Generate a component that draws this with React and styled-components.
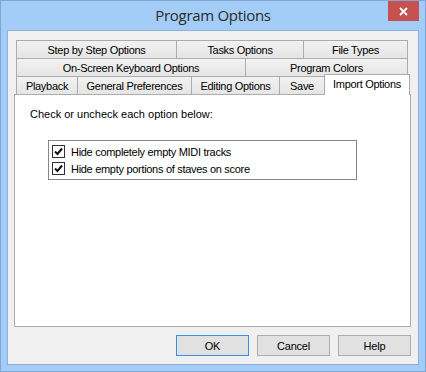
import React from 'react'
import styled, { createGlobalStyle } from 'styled-components'

const Global = createGlobalStyle`
  html, body { margin: 0; padding: 0; background: #a3cdf7; }
  * { box-sizing: border-box; }
`

const Window = styled.div`
  width: 426px;
  height: 372px;
  border: 1px solid #7ea7d6;
  background: #a3cdf7;
  display: flex;
  flex-direction: column;
  font-family: "Liberation Sans", Arial, sans-serif;
  font-size: 11px;
  color: #000;
`

const TitleBar = styled.div`
  height: 29px;
  display: flex;
  align-items: flex-start;
  padding-right: 6px;
`

const Title = styled.div`
  flex: 1;
  padding-left: 37px;
  text-align: center;
  line-height: 29px;
  font-family: "Open Sans", "Noto Sans", sans-serif;
  font-size: 15px;
  letter-spacing: -0.3px;
  color: #2a2a2a;
`

const CloseButton = styled.div`
  width: 31px;
  height: 20px;
  background: #c75050;
  display: flex;
  align-items: center;
  justify-content: center;
`

const Client = styled.div`
  flex: 1;
  margin: 0 6px 6px 6px;
  border: 1px solid #8eb0da;
  background: #f0f0f0;
  padding: 9px 7px 8px 6px;
  display: flex;
  flex-direction: column;
`

const TabArea = styled.div`
  padding: 0 2px;
  display: flex;
  flex-direction: column;
`

const TabRow = styled.div`
  display: flex;
  align-items: flex-end;
  height: 18px;
`

const Tab = styled.div`
  height: 18px;
  border-top: 1px solid #acacac;
  border-left: 1px solid #acacac;
  border-right: ${p => (p.$last ? '1px solid #acacac' : 'none')};
  background: linear-gradient(#f2f2f2, #e5e5e5);
  display: flex;
  align-items: center;
  justify-content: center;
  white-space: nowrap;
  letter-spacing: -0.3px;
`

const ActiveTab = styled.div`
  position: relative;
  z-index: 1;
  height: 21px;
  margin-bottom: -1px;
  margin-right: -2px;
  border: 1px solid #acacac;
  border-bottom: none;
  background: #fff;
  display: flex;
  justify-content: center;
  padding-top: 3px;
  white-space: nowrap;
  letter-spacing: -0.3px;
`

const Panel = styled.div`
  flex: 1;
  background: #fff;
  border: 1px solid #acacac;
  padding: 13px 15px;
`

const Label = styled.div`
  line-height: 13px;
`

const OptionBox = styled.div`
  width: 309px;
  margin: 19px 0 0 18px;
  border: 1px solid #828790;
  padding: 2px 3px;
`

const OptionRow = styled.label`
  height: 17px;
  display: flex;
  align-items: center;
  gap: 6px;
  letter-spacing: -0.3px;
`

const Check = styled.span`
  width: 13px;
  height: 13px;
  border: 1px solid #333;
  background: #fff;
  display: flex;
  align-items: center;
  justify-content: center;
`

const ButtonRow = styled.div`
  margin-top: 8px;
  display: flex;
  justify-content: flex-end;
  gap: 8px;
`

const Button = styled.div`
  width: 73px;
  height: 21px;
  border: 1px solid ${p => (p.$default ? '#3c8fe6' : '#adadad')};
  background: #e1e1e1;
  display: flex;
  align-items: center;
  justify-content: center;
  letter-spacing: -0.2px;
`

const row1 = [['Step by Step Options', 160], ['Tasks Options', 127], ['File Types', 105]]
const row2 = [['On-Screen Keyboard Options', 229], ['Program Colors', 163]]
const row3 = [['Playback', 61], ['General Preferences', 114], ['Editing Options', 88], ['Save', 45]]

const options = ['Hide completely empty MIDI tracks', 'Hide empty portions of staves on score']

function Checkbox () {
  return (
    <Check>
      <svg width='9' height='9' viewBox='0 0 9 9'>
        <polyline points='1,4.5 3.5,7 8,1.5' fill='none' stroke='#111' strokeWidth='2' />
      </svg>
    </Check>
  )
}

export default function App () {
  return (
    <Window>
      <Global />
      <TitleBar>
        <Title>Program Options</Title>
        <CloseButton>
          <svg width='9' height='9' viewBox='0 0 9 9'>
            <path d='M1 1L8 8M8 1L1 8' stroke='#fff' strokeWidth='1.8' />
          </svg>
        </CloseButton>
      </TitleBar>
      <Client>
        <TabArea>
          <TabRow>
            {row1.map(([t, w], i) => <Tab key={t} style={{ width: w }} $last={i === row1.length - 1}>{t}</Tab>)}
          </TabRow>
          <TabRow>
            {row2.map(([t, w], i) => <Tab key={t} style={{ width: w }} $last={i === row2.length - 1}>{t}</Tab>)}
          </TabRow>
          <TabRow>
            {row3.map(([t, w]) => <Tab key={t} style={{ width: w }}>{t}</Tab>)}
            <ActiveTab style={{ width: 86 }}>Import Options</ActiveTab>
          </TabRow>
        </TabArea>
        <Panel>
          <Label>Check or uncheck each option below:</Label>
          <OptionBox>
            {options.map(o => (
              <OptionRow key={o}>
                <Checkbox />
                {o}
              </OptionRow>
            ))}
          </OptionBox>
        </Panel>
        <ButtonRow>
          <Button $default>OK</Button>
          <Button>Cancel</Button>
          <Button>Help</Button>
        </ButtonRow>
      </Client>
    </Window>
  )
}
